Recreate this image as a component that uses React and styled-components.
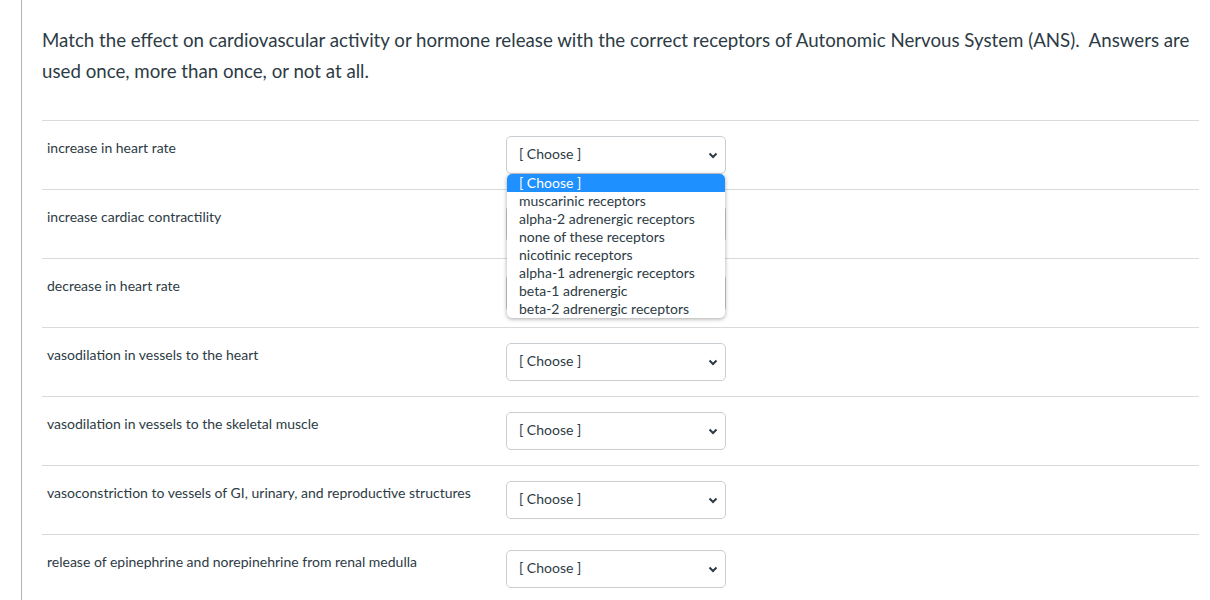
import React from "react";
import styled, { createGlobalStyle } from "styled-components";

const GlobalStyle = createGlobalStyle`
  html, body {
    margin: 0;
    padding: 0;
    background: #fff;
    font-family: Lato, "Liberation Sans", sans-serif;
    color: #2d3b45;
  }
`;

const Page = styled.div`
  margin-left: 21px;
  border-left: 1px solid #b4b4b4;
  min-height: 600px;
  padding: 25px 11px 0 20px;
`;

const Question = styled.p`
  margin: 0 0 33px 0;
  font-size: 18.7px;
  line-height: 31px;
  padding-right: 8px;
`;

const Rows = styled.div`
  display: flex;
  flex-direction: column;
`;

const Row = styled.div`
  display: grid;
  grid-template-columns: 464px 220px;
  height: 68px;
  border-top: 1px solid #dadada;
`;

const Label = styled.div`
  font-size: 14px;
  line-height: 18px;
  padding: 18px 0 0 5px;
`;

const SelectWrap = styled.div`
  position: relative;
  padding-top: 15px;
`;

const SelectBox = styled.div`
  box-sizing: border-box;
  height: 38px;
  border: 1px solid #c7cdd1;
  border-radius: 5px;
  display: flex;
  align-items: center;
  justify-content: space-between;
  padding: 0 7px 3px 12px;
  font-size: 14px;
  background: #fff;
`;

const Menu = styled.ul`
  position: absolute;
  top: 53px;
  left: 1px;
  width: 218px;
  margin: 0;
  padding: 0;
  list-style: none;
  background: #fff;
  border-radius: 5px;
  overflow: hidden;
  box-shadow: 0 1px 4px rgba(0, 0, 0, 0.35);
  z-index: 2;
`;

const Option = styled.li`
  height: 18px;
  line-height: 17px;
  font-size: 14px;
  padding-left: 12px;
  color: ${p => (p.$active ? "#fff" : "#2d3b45")};
  background: ${p => (p.$active ? "#1e90ff" : "transparent")};
`;

const Chevron = () => (
  <svg width="10" height="8" viewBox="0 0 10 8" style={{ marginTop: 3 }}>
    <polyline points="1.5,2.5 5,6 8.5,2.5" fill="none" stroke="#2d3b45" strokeWidth="2" />
  </svg>
);

const options = [
  "[ Choose ]",
  "muscarinic receptors",
  "alpha-2 adrenergic receptors",
  "none of these receptors",
  "nicotinic receptors",
  "alpha-1 adrenergic receptors",
  "beta-1 adrenergic",
  "beta-2 adrenergic receptors",
];

const items = [
  "increase in heart rate",
  "increase cardiac contractility",
  "decrease in heart rate",
  "vasodilation in vessels to the heart",
  "vasodilation in vessels to the skeletal muscle",
  "vasoconstriction to vessels of GI, urinary, and reproductive structures",
  "release of epinephrine and norepinehrine from renal medulla",
];

const App = () => (
  <>
    <GlobalStyle />
    <Page>
      <Question>
        Match the effect on cardiovascular activity or hormone release with the correct receptors of Autonomic Nervous System (ANS).&nbsp; Answers are used once, more than once, or not at all.
      </Question>
      <Rows>
        {items.map((text, i) => (
          <Row key={i}>
            <Label>{text}</Label>
            <SelectWrap>
              <SelectBox>
                <span>[ Choose ]</span>
                <Chevron />
              </SelectBox>
              {i === 0 && (
                <Menu>
                  {options.map((o, j) => (
                    <Option key={j} $active={j === 0}>{o}</Option>
                  ))}
                </Menu>
              )}
            </SelectWrap>
          </Row>
        ))}
      </Rows>
    </Page>
  </>
);

export default App;
